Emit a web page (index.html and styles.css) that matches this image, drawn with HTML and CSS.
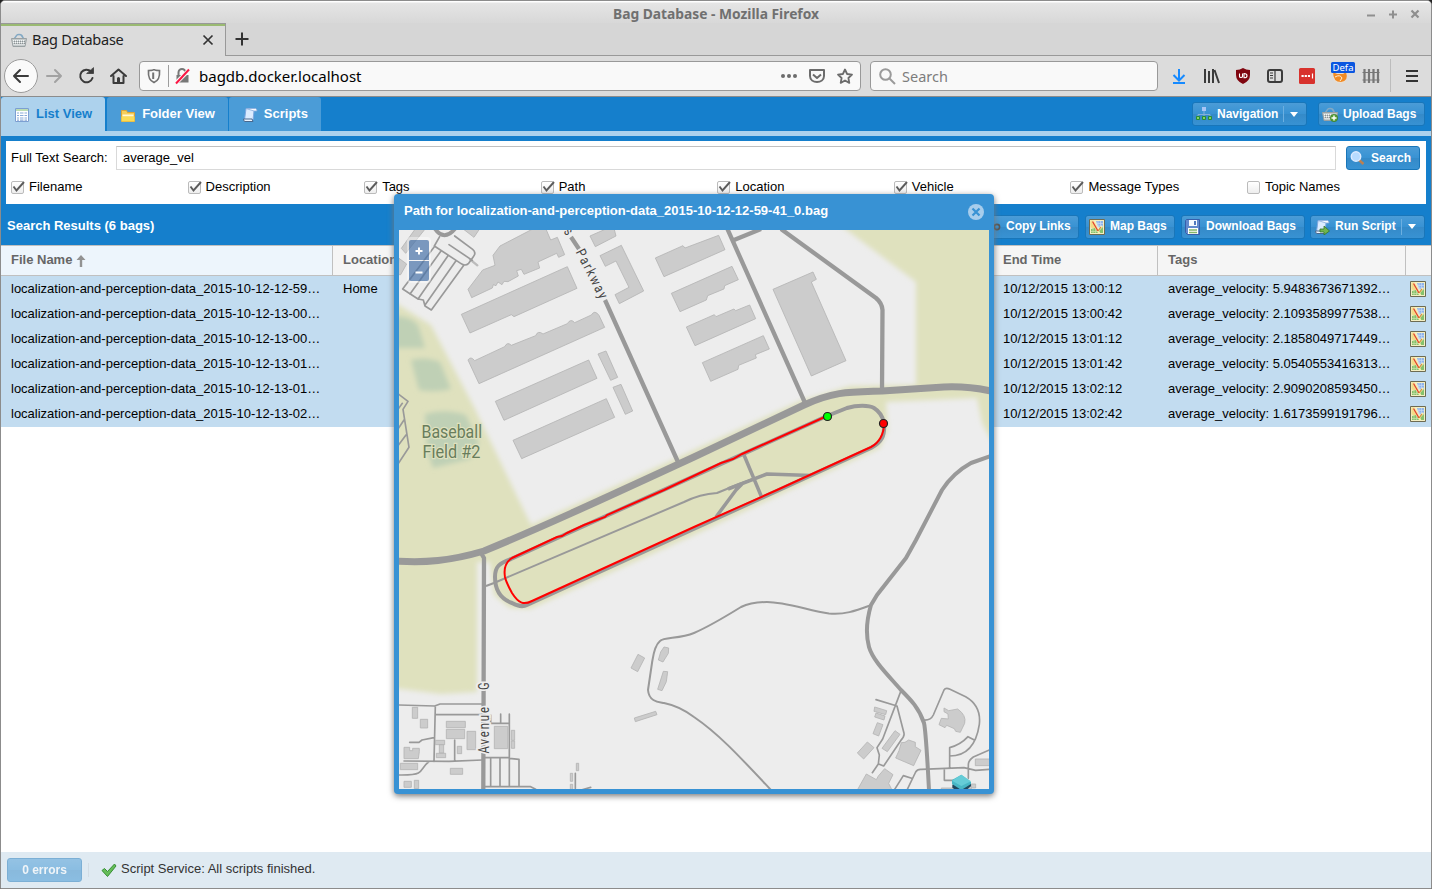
FILE: index.html
```html
<!DOCTYPE html>
<html lang="en">
<head>
<meta charset="utf-8">
<title>Bag Database</title>
<link rel="stylesheet" href="styles.css">
</head>
<body>
<svg class="defs" width="0" height="0">
  <symbol id="i-map" viewBox="0 0 16 16">
    <path d="M.5.5h15v15H.5z" fill="#f4efc4" stroke="#6d6b52"/>
    <path d="M1.500 1.500h3l4 7-3 1-4-1z" fill="#f3dc86"/>
    <path d="M7 2h7v6l-3 1-2-2z" fill="#8fb4ea"/>
    <path d="M9 2v7M11.500 2v7M7 4.500h7M7 7h7" stroke="#c7daf6" stroke-width=".7"/>
    <path d="M2 10l4-1 3 3 5-4v6H2z" fill="#86c26c"/>
    <path d="M2 12.500h7M4 9v5M6.500 9v5" stroke="#cbe3ae" stroke-width=".7"/>
    <path d="M3.500 2l5.500 10 4-5M9 12l1.500 2" fill="none" stroke="#fbf0b0" stroke-width="2"/>
    <path d="M3.500 2.500l5.500 9.500" stroke="#e2452c" stroke-width="1.400"/>
    <path d="M9 12l3-4" stroke="#d2873b" stroke-width="1.200"/>
  </symbol>
  <symbol id="i-basket" viewBox="0 0 16 16">
    <path d="M4 7c0-6 8-6 8 0M3 7l3-4M13 7l-3-4" fill="none" stroke="#83a9c4" stroke-width="1.300"/>
    <path d="M.500 6.500h15l-1.500 8H2z" fill="#c4cacb" stroke="#9aa1a3"/>
    <path d="M2 8.500h12M2 10.500h12M2.500 12.500h11" stroke="#f4f6f6" stroke-dasharray="1 1"/>
    <path d="M3 9.500h11M3 11.500h11" stroke="#7c8487" stroke-width=".8" stroke-dasharray="1 1"/>
  </symbol>
  <symbol id="i-script" viewBox="0 0 16 16">
    <path d="M4 1.500h10c-1.500 0-2 1-2 2.500l-1 9H2.500z" fill="#dcecff" stroke="#7fa8df"/>
    <path d="M4 1.500h9.500q1.500 0 1.500 2.500h-3z" fill="#f8fbff" stroke="#86abdc" stroke-width=".8"/>
    <path d="M1.500 12h8.500l1 2.500H3Q1.500 14.500 1.500 12z" fill="#edf5ff" stroke="#49698f"/>
  </symbol>
  <symbol id="check" viewBox="0 0 14 14"><path d="M2.500 6.500l3 4L13 2" fill="none" stroke="#5c5c5c" stroke-width="1.900"/></symbol>
</svg>

<div class="window">
  <header class="titlebar">
    <span class="wm-title">Bag Database - Mozilla Firefox</span>
    <svg class="wm-buttons" width="56" height="12" viewBox="0 0 56 12"><path d="M1 7.500h8M23 6.500h8M27 2.500v8" stroke="#8f8f8f" stroke-width="2"/><path d="M45.500 2.500l7 7M52.500 2.500l-7 7" stroke="#8f8f8f" stroke-width="2.200"/></svg>
  </header>
  <nav class="browser-tabs">
    <div class="browser-tab">
      <svg width="16" height="16"><use href="#i-basket"/></svg>
      <span class="tab-title">Bag Database</span>
      <svg width="12" height="12" viewBox="0 0 12 12"><path d="M1.500 1.500l9 9M10.500 1.500l-9 9" stroke="#333" stroke-width="1.700"/></svg>
    </div>
    <div class="new-tab"><svg width="14" height="14" viewBox="0 0 14 14"><path d="M7 .5v13M.5 7h13" stroke="#333" stroke-width="2"/></svg></div>
  </nav>
  <div class="toolbar">
    <svg class="nav-icons" width="128" height="36" viewBox="0 0 128 36" fill="none" stroke="#3b3b3b" stroke-width="2" stroke-linecap="round" stroke-linejoin="round">
      <circle cx="17" cy="18" r="16.500" fill="#fafafa" stroke="#9b9b9b" stroke-width="1"/>
      <path d="M24 18H10M16 12l-6 6 6 6"/>
      <path d="M43 18h14M51 12l6 6-6 6" stroke="#a2a2a2"/>
      <path d="M87 13.500A6.300 6.300 0 1 0 88.500 20"/><path d="M83 15.500h6.500V10z" fill="#3b3b3b" stroke-width=".8"/>
      <path d="M107 18l7.500-6.500 7.500 6.500M109.500 18v7h10v-7"/><path d="M114.500 20.500v4" stroke-width="3"/>
    </svg>
    <div class="urlbar">
      <svg class="url-left" width="48" height="28" viewBox="0 0 48 28" fill="none">
        <path d="M3.500 8.500Q9 8.500 9 7q0 1.500 5.500 1.500c.5 7-1 10-5.500 12-4.500-2-6-5-5.500-12z" stroke="#737373" stroke-width="1.700"/><path d="M8.200 10.500v6.500" stroke="#737373" stroke-width="2"/>
        <path d="M23.500 3v22" stroke="#9d9d9d"/>
        <path d="M33.500 13v-2.500a3.500 3.500 0 0 1 7 0V13" stroke="#777" stroke-width="2"/><path d="M31.500 13h12v7.500h-12z" fill="#777"/>
        <path d="M31 21L45 7" stroke="#f9f9f9" stroke-width="4"/><path d="M31 21.500L44 7.500" stroke="#fb1644" stroke-width="2"/>
      </svg>
      <span class="url">bagdb.docker.localhost</span>
      <svg class="url-right" width="76" height="20" viewBox="0 0 76 20" fill="none" stroke="#6c6c6c" stroke-width="2">
        <g fill="#6c6c6c" stroke="none"><circle cx="5" cy="10" r="2"/><circle cx="11" cy="10" r="2"/><circle cx="17" cy="10" r="2"/></g>
        <path d="M32 4h14v6c0 8-14 8-14 0zM35 8.500l4 3.500 4-3.500" stroke-linejoin="round"/>
        <path d="M67 3.500l2.100 4.500 4.900.6-3.600 3.400.9 4.900-4.300-2.400-4.300 2.400.9-4.900L60 8.600l4.900-.6z" stroke-width="1.800" stroke-linejoin="round"/>
      </svg>
    </div>
    <div class="searchbar">
      <svg width="17" height="17" viewBox="0 0 17 17" fill="none" stroke="#9a9a9a" stroke-width="2"><circle cx="6.500" cy="6.500" r="5.300"/><path d="M10.500 10.500L16 16"/></svg>
      <span>Search</span>
    </div>
    <svg class="ext-icons" width="260" height="40" viewBox="1166 56 260 40" fill="none">
      <path d="M1179 69v11M1173.500 75l5.500 5.500 5.500-5.500M1173 83h12" stroke="#168aff" stroke-width="2"/>
      <path d="M1205 69v14M1209 71v12M1213 69v14M1214.500 70l4.500 13" stroke="#3b3b3b" stroke-width="2"/>
      <path d="M1236 70q4 0 7-2 3 2 7 2v5q0 6-7 9-7-3-7-9z" fill="#800610"/>
      <path d="M1239.500 73.500v3q0 1 1.500 1t1.500-1v-3M1244 73.500v4.300q3 0 3-2.100t-3-2.200z" stroke="#fff" stroke-width="1.100"/>
      <rect x="1268" y="70" width="14" height="12" rx="2" stroke="#3b3b3b" stroke-width="2"/><path d="M1275 70v12M1270 73h3M1270 75.500h3M1270 78h3" stroke="#3b3b3b" stroke-width="1.200"/>
      <rect x="1299" y="68" width="16" height="16" rx="1.500" fill="#d8322d"/><path d="M1301.500 76h8.500" stroke="#fff" stroke-width="2.200" stroke-dasharray="2.200 1"/><path d="M1312.500 73.500v5" stroke="#fff" stroke-width="1.200"/>
      <circle cx="1340" cy="76" r="7.500" fill="#e6ded5"/><path d="M1333 72l4 2h6l3-2q3 9-5 10-8 0-8-10z" fill="#f28b24"/><path d="M1335 77q5-3 7 1l-2 3" stroke="#fff0d5"/>
      <rect x="1331" y="62" width="24" height="11" rx="1.500" fill="#0b57e0"/>
      <text x="1332.500" y="71" class="badge-text" textLength="21">Defa</text>
      <path d="M1364.500 69v14M1369 69v14M1373.500 69v14M1378 69v14" stroke="#777" stroke-width="2.200"/><path d="M1362.500 72.500h17M1362.500 80h17" stroke="#777" stroke-width="1.200"/>
      <path d="M1390.500 59v33" stroke="#bcbcbc"/>
      <path d="M1406 71h12M1406 76h12M1406 81h12" stroke="#333" stroke-width="2"/>
    </svg>
  </div>

  <main class="app">
    <div class="app-bar">
      <div class="app-tab active"><svg width="16" height="16" viewBox="0 0 16 16"><path d="M1.500 1.500h13v13h-13z" fill="#fff" stroke="#7c9fd1"/><path d="M2 3h12" stroke="#79ba67" stroke-width="1.200"/><path d="M3 6h10M3 8.500h10M3 11h10M3 13.200h10" stroke="#88abd8" stroke-width="1.200"/><path d="M5.500 5v9M10 5v9" stroke="#fff"/></svg>List View</div>
      <div class="app-tab"><svg width="16" height="16" viewBox="0 0 16 16"><path d="M1.500 3.500h5l1 2h7v9h-13z" fill="#f6cf5a" stroke="#dda437"/><path d="M2.500 7.500h11v2h-11z" fill="#fff8d8"/><path d="M1.500 9.500h13v5h-13z" fill="#fadc57"/></svg>Folder View</div>
      <div class="app-tab"><svg width="16" height="16"><use href="#i-script"/></svg>Scripts</div>
      <div class="app-actions">
        <button class="btn nav"><svg width="16" height="16" viewBox="0 0 16 16"><path d="M8 4v4M2 11V8.500h12V11M8 8v3" fill="none" stroke="#83b0d8"/><path d="M6 1h4v4H6z" fill="#a9c5f5"/><path d="M.5 10.500h3v3h-3zM6.500 10.500h3v3h-3zM12.500 10.500h3v3h-3z" fill="#81d365" stroke="#278b35"/></svg><span>Navigation</span><i class="split"></i><i class="caret"></i></button>
        <button class="btn upload"><svg width="16" height="16" viewBox="0 0 16 16"><use href="#i-basket"/><circle cx="12" cy="12" r="3.700" fill="#58a238" stroke="#377827" stroke-width=".6"/><path d="M12 9.500v5M9.500 12h5" stroke="#fff" stroke-width="1.400"/></svg><span>Upload Bags</span></button>
      </div>
    </div>
    <div class="strip"></div>
    <section class="search-panel">
      <div class="query">
        <label>Full Text Search:</label><div class="field">average_vel</div>
        <button class="btn search"><svg width="16" height="16" viewBox="0 0 16 16"><path d="M9 10l4.500 4" stroke="#bd8051" stroke-width="2.400"/><circle cx="6" cy="6.500" r="4.700" fill="#b7dbff" stroke="#dceaff" stroke-width="1.500"/></svg><span>Search</span></button>
      </div>
      <div class="checks">
        <span><i class="box"><svg><use href="#check"/></svg></i>Filename</span>
        <span><i class="box"><svg><use href="#check"/></svg></i>Description</span>
        <span><i class="box"><svg><use href="#check"/></svg></i>Tags</span>
        <span><i class="box"><svg><use href="#check"/></svg></i>Path</span>
        <span><i class="box"><svg><use href="#check"/></svg></i>Location</span>
        <span><i class="box"><svg><use href="#check"/></svg></i>Vehicle</span>
        <span><i class="box"><svg><use href="#check"/></svg></i>Message Types</span>
        <span><i class="box"></i>Topic Names</span>
      </div>
    </section>
    <div class="results-bar">
      <h2>Search Results (6 bags)</h2>
      <button class="btn copy"><svg width="16" height="16" viewBox="0 0 16 16"><circle cx="12" cy="8" r="2.600" fill="none" stroke="#555" stroke-width="1.600"/><circle cx="5" cy="8" r="3" fill="none" stroke="#555" stroke-width="1.600"/></svg><span>Copy Links</span></button>
      <button class="btn map-bags"><svg width="16" height="16"><use href="#i-map"/></svg><span>Map Bags</span></button>
      <button class="btn download"><svg width="16" height="16" viewBox="0 0 16 16"><path d="M1.500.5h13v15h-12l-2-2V1.500z" fill="#6289cd" stroke="#365eaa"/><path d="M4 1h8v6H4z" fill="#f6f9ff"/><path d="M9 2h2v4H9z" fill="#5178bd"/><path d="M3 9h10v6H3z" fill="#fff"/><path d="M4 11h8M4 13.500h8" stroke="#86b66a" stroke-width="1.400"/></svg><span>Download Bags</span></button>
      <button class="btn run"><svg width="16" height="16" viewBox="0 0 16 16"><use href="#i-script"/><path d="M6 10h4V7l5.500 5-5.500 4v-3H6z" fill="#71b44b" stroke="#32762b" stroke-width=".8"/></svg><span>Run Script</span><i class="split"></i><i class="caret"></i></button>
    </div>
    <section class="grid">
      <div class="row head"><div class="sorted">File Name <svg width="10" height="12" viewBox="0 0 10 12"><path d="M5 0l4.500 5H6.200v7H3.800V5H.5z" fill="#929292"/></svg></div><div>Location</div><div>End Time</div><div>Tags</div><div></div></div>
      <div class="row"><div>localization-and-perception-data_2015-10-12-12-59…</div><div>Home</div><div>10/12/2015 13:00:12</div><div>average_velocity: 5.9483673671392…</div><div><svg width="16" height="16"><use href="#i-map"/></svg></div></div>
      <div class="row"><div>localization-and-perception-data_2015-10-12-13-00…</div><div></div><div>10/12/2015 13:00:42</div><div>average_velocity: 2.1093589977538…</div><div><svg width="16" height="16"><use href="#i-map"/></svg></div></div>
      <div class="row"><div>localization-and-perception-data_2015-10-12-13-00…</div><div></div><div>10/12/2015 13:01:12</div><div>average_velocity: 2.1858049717449…</div><div><svg width="16" height="16"><use href="#i-map"/></svg></div></div>
      <div class="row"><div>localization-and-perception-data_2015-10-12-13-01…</div><div></div><div>10/12/2015 13:01:42</div><div>average_velocity: 5.0540553416313…</div><div><svg width="16" height="16"><use href="#i-map"/></svg></div></div>
      <div class="row"><div>localization-and-perception-data_2015-10-12-13-01…</div><div></div><div>10/12/2015 13:02:12</div><div>average_velocity: 2.9090208593450…</div><div><svg width="16" height="16"><use href="#i-map"/></svg></div></div>
      <div class="row"><div>localization-and-perception-data_2015-10-12-13-02…</div><div></div><div>10/12/2015 13:02:42</div><div>average_velocity: 1.6173599191796…</div><div><svg width="16" height="16"><use href="#i-map"/></svg></div></div>
    </section>
    <footer class="statusbar">
      <button class="btn errors"><span>0 errors</span></button><i class="sep"></i>
      <svg width="16" height="16" viewBox="0 0 16 16"><path d="M1 8.500l2.500-2 3 3L13.500 2l1.500 2-8.500 10.500z" fill="#65bd59" stroke="#368f35" stroke-width="1"/></svg>
      <span>Script Service: All scripts finished.</span>
    </footer>
  </main>
</div>

<div class="dialog">
  <div class="dialog-head"><span>Path for localization-and-perception-data_2015-10-12-12-59-41_0.bag</span>
    <svg width="16" height="16" viewBox="0 0 16 16"><circle cx="8" cy="8" r="8" fill="#a7cdec"/><path d="M4.500 4.500l7 7M11.500 4.500l-7 7" stroke="#3892d4" stroke-width="2.200"/></svg></div>
  <svg class="map" width="590" height="559" viewBox="399 230 590 559">
    <defs><filter id="soft" x="-10%" y="-10%" width="120%" height="120%"><feGaussianBlur stdDeviation="2.500"/></filter></defs>
    <rect x="399" y="230" width="590" height="559" fill="#ededed"/>
    <g filter="url(#soft)" fill="#dfe1be">
      <path d="M385 298L399 305 431 325 474 407 514 490 531 525 694 450 800 401 850 386 916 385V282L840 225H1005V455L991 440 982 423 977 398 886 402 888 430 880 448 777 496 694 535 530 609 510 608 494 595 490 562H477V692L441 694 385 687z"/>
    </g>
    <path filter="url(#soft)" fill="#bfd0b5" d="M390 316Q410 315 418 325L425 348H390zM411 360Q425 356 440 362L451 389Q435 393 419 390zM425 414Q445 408 466 415L479 443 470 459 433 468 427 450z"/>
    <g transform="translate(394 190) scale(.33333)" class="bld">
      <path d="M22 175L65 115H95L35 190zM15 205L38 222 20 254H10zM205 115L240 142 258 115zM420 115H455L470 150 490 142 512 194 494 202 488 190 432 216 437 234 390 253 382 238 368 242 373 258 342 275 330 274 324 284 312 276 306 287 298 284 295 294 233 323 222 298 266 240 303 226 297 196 318 168z"/>
      <path d="M202 373L520 230 549 295 360 380 352 374 228 429zM222 510Q230 497 242 512L332 470Q340 454 352 466L425 437Q432 420 447 432L520 401Q530 384 542 398L592 375Q602 358 615 376L632 412 255 581zM304 634L584 510 609 565 330 691zM357 751L637 626 662 682 383 806zM612 492L636 483 671 562 650 571zM657 592L681 583 716 663 694 673z"/>
      <path d="M588 138L640 115H660L666 138 604 170zM618 197L682 166 749 303 676 341 663 314 705 292 666 213 634 229zM784 204L867 167 873 174 974 136 993 179 810 260zM832 310L1014 229 1033 269 992 287 990 297 941 317 937 330 858 365zM877 411L961 374 966 380 1020 357 1025 362 1067 345 1085 386 903 467zM925 518L1108 437 1126 477 1084 494 1087 504 1034 526 1032 538 950 574zM1137 298L1257 246 1267 268 1252 276 1356 512 1252 558z"/>
    </g>
    <g transform="translate(394 190) scale(.33333)" class="road-thin">
      <path d="M228 208L250 226" stroke="#bbb" stroke-width="7"/>
      <path d="M137 140L121 168M182 138L236 178Q248 188 238 200L224 220Q214 230 200 220L121 168M165 164L235 211M121 170L26 297 72 327 88 330 93 348 112 360 210 225M48 312L141 183M72 327L162 197M93 345L186 212M10 610L42 634 27 658 45 772 8 828M25 640L10 660M30 690L10 720M36 735L10 770"/>
      <path d="M122 115Q150 157 184 115" stroke-width="12"/>
    </g>
    <g class="road" fill="none">
      <path d="M486 586L494 583 684 502Q700 494 717 493L739 484 767 474" stroke-width="2"/>
      <path d="M728 489L767 474 811 475.500M716 517L736 490 742 484M744 455L762 498" stroke-width="3.500"/>
      <path d="M395 561C425 563 450 561 484 551C540 528 590 505 694 457L804 405C835 391 850 392 882 391L944 387Q968 386 991 391" stroke-width="7"/>
      <path d="M827 416L847 408C857 405 869 405 874 408Q882 413 884 423C885 436 882 442 871 448L527 605Q521 608 512 603C498 598 495 586 495 577C495 567 499 563 511 559z" stroke-width="4"/>
      <path d="M571 237L579 249M605 300L678 462M727 228L806 405M734 240L761 229M781 229L876 298Q882 303 882.500 310L882 391M481 553L484 558 483.300 790" stroke-width="4.300"/>
      <path d="M991 456L971 463Q953 473 942 490L916 540 906 558 877 595 871 605C866 622 866 636 869 647C873 661 889 676 901 690C911 700 919 708 924 723Q926 732 929 790" stroke-width="4"/>
      <path d="M870 605.500C855 611 844 615 829 613.500C810 611 786 602 767 602Q751 602 741 607C720 620 710 626 694 633C680 639 664 637 660 641C654 646 653 657 652 663L648 690C649 702 659 702 664 703C674 705 686 711 694 717C719 734 740 757 771 790" stroke-width="2"/>
    </g>
    <g transform="translate(394 490) scale(.33333)">
      <g class="road-thin"><path d="M15 645L122 648 138 642H265M124 648L120 815M124 674H265M47 757H75L84 750 120 743M30 813L165 814 265 810M12 855Q60 856 73 849C86 842 90 824 105 815M182 750V812M290 675V700H346V675M320 672V700M346 672V805L375 808V890M270 803H346M290 803V890M318 803V890M346 803V890M270 890H410L425 898M544 850V895M562 900L590 892" /></g>
      <path class="bld" d="M55 652h16v33H55zM79 688h22v26H79zM157 694h57v19h-57zM157 718h55v28h-55zM219 724h26v55h-26zM301 709h40v67h-40zM352 721h10v30h-10zM352 753h10v22h-10zM124 751h28v13h-28zM136 764h13v25h-13zM127 790h28v13h-28zM190 769h13v22h-13zM30 772H47V782H56V775H76V785L73 806H30zM19 820h52v19H19zM169 835h37v18h-37zM30 874h22v18H30zM61 871h13v25H61zM547 820h7v22h-7zM529 850h7v24h-7zM529 883h7v15h-7zM732 493L752 504 731 545 711 534zM810 471L824 474 823 490 807 516 793 510 800 486zM808 544L821 545 817 575 804 602 791 598zM721 684L785 664 789 674 724 695z"/>
    </g>
    <g transform="translate(694 490) scale(.33333)">
      <path class="bld" d="M542 651L578 662 575 674 540 664zM546 669L573 678 570 690 542 681zM550 698L567 704 554 738 537 731zM520 756L540 773 509 807 490 789zM603 722L618 733 580 785 564 775zM633 757L644 750 664 757V770L681 781 659 827 605 804 615 782 622 758zM517 852L547 869 553 858 572 836 597 854 584 880 594 900H490zM750 654L764 662 791 657Q818 676 812 700L799 727 785 724 781 716 758 706 753 713 735 704 742 685 763 687 762 672 750 665zM844 807H890V827H844zM742 894H845V882H832V900H742z"/>
      <path class="road-thin" d="M688 690Q710 692 718 675L750 600Q755 592 768 598L815 620C850 640 860 667 856 703C849 750 830 798 767 798M767 835V773Q800 764 822 740L841 750M546 629L609 648 630 730Q632 739 620 752L569 828 554 822M620 605L566 747 549 773 556 795 553 822 535 848M602 898L628 857 653 865M640 898L665 846Q670 837 682 838L810 833 845 841 890 838M823 865V825Q823 811 838 801L890 778M751 838V871H790"/>
      <path d="M775 884L800 867 831 882V889L802 912 775 893z" fill="#20485e"/><path d="M774 870L802 854 831 876V882L802 900 774 882z" fill="#48b7c5"/><path d="M774 872L802 854 831 874 802 888z" fill="#65ccd7"/>
    </g>
    <path class="track" d="M827 416L742 454 733 459 721 463 664 490 607 515 605 517 584 525 567 533 562 536 557 537 512 558C504 563 504 571 505 577Q506 582 512 593C519 604 524 605 532 601L694 527 777 490 871 447C879 443 884 434 884 424"/>
    <circle cx="827.500" cy="416.500" r="4" fill="#0f0" stroke="#222" stroke-width="1.200"/><circle cx="883.500" cy="423.500" r="4" fill="#f00" stroke="#222" stroke-width="1.200"/>
    <g class="place"><text x="421.500" y="438" textLength="60.500" lengthAdjust="spacingAndGlyphs">Baseball</text><text x="422.500" y="458" textLength="58" lengthAdjust="spacingAndGlyphs">Field #2</text></g>
    <g class="street"><text transform="translate(575.500 252) rotate(63) scale(.8 1)" textLength="67">Parkway</text><text transform="translate(558 225) rotate(52) scale(.8 1)" textLength="18">ns</text><text transform="translate(489 753.500) rotate(-90) scale(.8 1)" textLength="58">Avenue</text><text transform="translate(489 690) rotate(-90) scale(.8 1)">G</text></g>
    <rect x="407" y="237" width="24" height="46" rx="4" fill="#fff" fill-opacity=".4"/>
    <path d="M409 242q0-2 2-2h16q2 0 2 2v18h-20zM409 261h20v18q0 2-2 2h-16q-2 0-2-2z" fill="#003c88" fill-opacity=".5"/>
    <path d="M415.500 251h7M419 247.500v7M415.500 272.500h7" stroke="#fff" stroke-width="2"/>
  </svg>
</div>
</body>
</html>
```
FILE: styles.css
```css
* { box-sizing: border-box; }
body { margin: 0; width: 1432px; height: 889px; overflow: hidden; background: #222; font: 13px/17px "Liberation Sans", Arial, sans-serif; color: #000; }
svg { display: block; flex: none; }
.defs { position: absolute; }
.window { height: 889px; display: flex; flex-direction: column; border: 1px solid #8c8c8c; border-radius: 5px 5px 0 0; overflow: hidden; background: #d6d6d6; }
.titlebar { height: 22px; display: flex; align-items: center; justify-content: center; background: linear-gradient(#fff 0 1px, #e5e5e5 2px, #d8d8d8); padding-top: 4px; }
.wm-title { margin-left: 65px; flex: 1; text-align: center; font: bold 13.800px/18px "Noto Sans", sans-serif; color: #707070; }
.wm-buttons { margin-right: 9px; }
.browser-tabs { height: 33px; display: flex; font: 14.500px/20px "Noto Sans", sans-serif; color: #222; }
.browser-tab { width: 225px; display: flex; align-items: center; padding: 0 11px 0 10px; background: #dcdcdc; border: solid #999; border-width: 1px 1px 0 0; box-shadow: inset 0 2px #9aba72; }
.tab-title { flex: 1; margin-left: 5px; padding-bottom: 2px; letter-spacing: -.25px; }
.new-tab { flex: 1; padding: 9px; border-bottom: 1px solid #999; }
.toolbar { height: 41px; flex: none; display: flex; align-items: center; background: #dcdcdc; border-bottom: 1px solid #8c8c8c; padding: 0 5px 0 3px; }
.urlbar, .searchbar { height: 30px; display: flex; align-items: center; border: 1px solid #999; border-radius: 4px; background: #f9f9f9; font: 15px/20px "Noto Sans", sans-serif; }
.urlbar { width: 722px; margin-left: 7px; padding: 0 6px 0 5px; }
.url { flex: 1; margin-left: 6px; }
.searchbar { width: 288px; margin-left: 9px; padding-left: 8px; gap: 6px; color: #7d7d7d; font-size: 14.500px; }
.ext-icons { margin-left: 8px; }
.badge-text { font: 9.500px "Noto Sans", sans-serif; fill: #fff; }

.app { flex: 1; display: flex; flex-direction: column; background: #fff; min-height: 0; }
.app-bar { height: 34px; display: flex; background: #157fcc; }
.app-tab { display: flex; gap: 6px; padding: 8px 13px 0; margin-right: 1px; height: 34px; background: #4b9cd7; color: #fff; font-weight: bold; border-radius: 3px 3px 0 0; }
.app-tab svg { margin-top: 2px; }
.app-tab.active { color: #157fcc; background: #add2ed; margin-right: 2px; }
.app-actions { display: flex; margin-left: auto; gap: 11px; padding: 5px 6px 0 0; }
.btn { height: 24px; flex: none; display: flex; align-items: center; gap: 5px; padding: 0 0 0 3px; border: 1px solid #1976b9; border-radius: 3px; background: linear-gradient(#4b9cd7, #3892d3 50%, #358ac8 51%, #3892d3); color: #fff; font: bold 12px/16px "Liberation Sans", Arial, sans-serif; white-space: nowrap; }
.btn span { padding-bottom: 1px; }
.nav { width: 115px; }
.upload { width: 107px; }
.search { width: 74px; }
.copy { width: 98px; margin-left: auto; }
.map-bags { width: 90px; }
.download { width: 124px; }
.run { width: 115px; margin-left: -1px; }
.split { width: 1px; height: 16px; background: #6cafe0; }
.caret { border: 4px solid transparent; border-top: 5px solid #fff; border-bottom: 0; margin-left: 1px; }
.strip { height: 5px; background: #add2ed; }
.search-panel { height: 68px; border: 5px solid #157fcc; border-bottom: 0; padding: 5px; }
.query { display: flex; line-height: 22px; }
.query label { width: 105px; padding-top: 1px; }
.field { width: 1220px; height: 24px; margin-right: 10px; padding: 0 6px; border: 1px solid #d9d9d9; border-top-color: #c0c0c0; }
.checks { display: grid; grid-template-columns: repeat(8, 176.570px); padding-top: 8px; width: 1410px; }
.checks span { display: flex; gap: 5px; }
.box { width: 13px; height: 13px; margin-top: 3px; border: 1px solid #bbb; border-radius: 2px; background: linear-gradient(#fff, #eee); }
.box svg { width: 14px; height: 14px; margin: -2px 0 0 -1px; overflow: visible; }
.results-bar { height: 41px; display: flex; align-items: center; gap: 6px; padding: 4px 6px 0; background: #157fcc; }
h2 { margin: 0; padding-bottom: 2px; font-size: 13px; color: #fff; }
.grid { flex: 1; }
.row { display: grid; grid-template-columns: 332px 660px 165px 248px 25px; height: 25px; background: #c2dcf0; white-space: nowrap; }
.row:last-child { height: 26px; }
.row > div { padding: 4px 10px; }
.row > div:last-child { padding: 5px 0 0 4px; }
.row.head { height: 31px; background: #f5f5f5; border: solid #c0c0c0; border-width: 1px 0; font-weight: bold; color: #666; }
.row.head > div { border-right: 1px solid #c0c0c0; padding-top: 5px; }
.row.head > div:last-child { border: 0; }
.sorted { display: flex; gap: 4px; background: #edf5fc; }
.sorted svg { margin-top: 4px; }
.statusbar { height: 36px; display: flex; align-items: center; padding-left: 6px; background: #dfeaf2; color: #333; }
.errors { width: 75px; justify-content: center; padding: 0; opacity: .5; margin-right: 6px; }
.sep { width: 1px; height: 14px; background: #d3dde5; margin-right: 12px; }
.statusbar svg { margin-right: 4px; }
.statusbar > span { padding-bottom: 3px; }
.dialog { position: absolute; left: 394px; top: 194px; width: 600px; height: 600px; background: #3892d4; border-radius: 4px; padding: 0 5px 5px; box-shadow: 0 2px 6px #777; }
.dialog-head { height: 36px; display: flex; justify-content: space-between; align-items: center; padding: 0 5px; color: #fff; font-weight: bold; }
.dialog-head span { padding-bottom: 3px; }
.bld { fill: #ccc; stroke: #b5b5b5; stroke-width: 2.500; }
.map .bld { stroke-linejoin: round; }
.road { stroke: #999; stroke-linejoin: round; }
.road-thin { fill: none; stroke: #999; stroke-width: 5; stroke-linejoin: round; stroke-linecap: round; }
.track { fill: none; stroke: #f00; stroke-width: 2; }
.place { font: 18.500px Roboto, sans-serif; fill: #687d5c; stroke: #dfe1be; stroke-width: 2.500; paint-order: stroke; }
.street { font: 14px Roboto, sans-serif; fill: #444; stroke: #ededed; stroke-width: 4; paint-order: stroke; }
```
